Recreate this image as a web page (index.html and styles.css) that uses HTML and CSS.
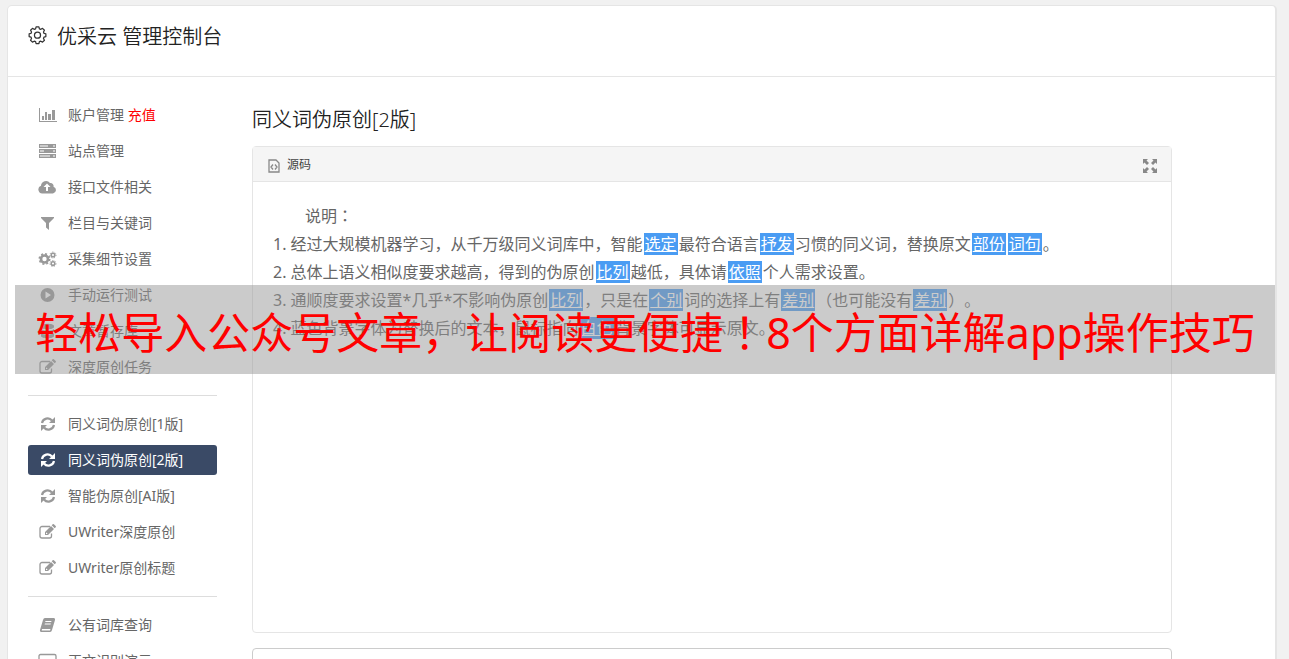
FILE: index.html
```
<!DOCTYPE html>
<html lang="zh-CN">
<head>
    <meta charset="utf-8">
    <title>优采云 管理控制台</title>
    <link rel="stylesheet" href="styles.css">
</head>
<body>
    <!-- icon shapes shared by the menu and the editor -->
    <svg class="sprite" width="0" height="0">
        <symbol id="gear" viewBox="0 0 20 20"><path fill="none" stroke="currentColor" stroke-width="1.300" stroke-linejoin="round" d="M8 3.500L8.500 1.500h3L12 3.500l1.500.5 1.800-1 2 2-1 1.800.5 1.400 2 .5v3l-2 .5-.5 1.500 1 1.800-2 2-1.800-1-1.500.5-.5 2h-3l-.5-2-1.500-.5-1.800 1-2-2 1-1.800-.5-1.500-2-.5v-3l2-.5.5-1.400-1-1.800 2-2 1.800 1z"/><circle cx="10" cy="10.200" r="3.200" fill="none" stroke="currentColor" stroke-width="1.300"/></symbol>
        <symbol id="chart" viewBox="0 0 20 16"><path fill="currentColor" d="M1 1h1v13h17v1H1zM4 9h2v4H4zM7 5h2v8H7zM10 7h3v6h-3zM14 3h3v10h-3z"/></symbol>
        <symbol id="server" viewBox="0 0 20 16"><path fill="currentColor" fill-rule="evenodd" d="M1 1h17v4H1zM1 6h17v4H1zM1 11h17v4H1zM2 2.500h8v1H2zM2 7.500h4v1H2zM2 12.500h10v1H2zM15 2.500h2v1h-2zM15 7.500h2v1h-2zM15 12.500h2v1h-2z"/></symbol>
        <symbol id="cloud" viewBox="0 0 20 16"><path fill="currentColor" fill-rule="evenodd" d="M5 14.500a4 4 0 0 1-2-7.700A5 5 0 0 1 12 4a3 3 0 0 1 3.500 3.700 3.500 3.500 0 0 1-.5 6.800zM9 4.500L5.500 8H8v4h2V8h2.500z"/></symbol>
        <symbol id="filter" viewBox="0 0 20 16"><path fill="currentColor" d="M3 2h13v1l-5 5v7l-3-2.500V8L3 3z"/></symbol>
        <symbol id="cogs" viewBox="0 0 20 16"><circle cx="6.500" cy="8" r="3.500" fill="none" stroke="currentColor" stroke-width="2.600"/><circle cx="6.500" cy="8" r="5.200" fill="none" stroke="currentColor" stroke-width="1.600" stroke-dasharray="2 2.080"/><g fill="none" stroke="currentColor" stroke-width="1.500"><circle cx="15" cy="4" r="1.800"/><circle cx="15" cy="12.500" r="1.800"/></g><g fill="none" stroke="currentColor" stroke-dasharray="1.200 1.400"><circle cx="15" cy="4" r="3"/><circle cx="15" cy="12.500" r="3"/></g></symbol>
        <symbol id="play" viewBox="0 0 20 16"><path fill="currentColor" fill-rule="evenodd" d="M9.500 1a7 7 0 1 1 0 14 7 7 0 0 1 0-14zM7.500 4.500v7l5.500-3.500z"/></symbol>
        <symbol id="database" viewBox="0 0 20 16"><path fill="currentColor" d="M3 3c0-3 13-3 13 0v1c0 3-13 3-13 0zM3 6c2 2 11 2 13 0v2c0 3-13 3-13 0zM3 10c2 2 11 2 13 0v3c0 3-13 3-13 0z"/></symbol>
        <symbol id="edit" viewBox="0 0 20 16"><path fill="none" stroke="currentColor" stroke-width="1.300" d="M12 2.500H4a2 2 0 0 0-2 2V12a2 2 0 0 0 2 2h7.500a2 2 0 0 0 2-2V9.500"/><path fill="currentColor" fill-rule="evenodd" d="M7 11V8l6-6 3 3-6 6zM13.700 1.300l1-1q.6-.5 1.200 0l1.800 1.800q.5.600 0 1.200l-1 1zM8 9v1h1l.5-.5-1-1z"/></symbol>
        <symbol id="sync" viewBox="0 0 20 16"><path fill="none" stroke="currentColor" stroke-width="2.200" d="M4 7a5.700 5.700 0 0 1 10-2.500M16 9a5.700 5.700 0 0 1-10 2.500"/><path fill="currentColor" d="M17 1v6h-6zM3 15V9h6z"/></symbol>
        <symbol id="book" viewBox="0 0 20 16"><path fill="currentColor" fill-rule="evenodd" d="M7 1h9q1.500.3 1 2l-3 10q-.4 2-2 2H4q-2.500 0-2-2L5 3q.5-2 2-2zM7.500 4l-.3 1h6l.3-1zM6.900 6.500l-.3 1h6l.3-1zM4 12l-.3 1.500H12l.5-1.500z"/></symbol>
        <symbol id="screen" viewBox="0 0 20 16"><rect x="1" y="1.500" width="17" height="12" rx="1.500" fill="none" stroke="currentColor" stroke-width="1.300"/></symbol>
        <symbol id="source" viewBox="0 0 12 14"><path fill="none" stroke="currentColor" stroke-width="1.300" d="M1 1h7l3 3v9H1zM5 5.500L3 8l2 2.500M7 5.500L9 8l-2 2.500"/></symbol>
        <symbol id="expand" viewBox="0 0 14 14"><path fill="currentColor" d="M0 0h5L3.500 1.500 6 4 4 6 1.500 3.500 0 5zM14 0v5l-1.500-1.500L10 6 8 4l2.500-2.500L9 0zM0 14V9l1.500 1.500L4 8l2 2-2.500 2.500L5 14zM14 14H9l1.500-1.500L8 10l2-2 2.500 2.500L14 9z"/></symbol>
    </svg>

    <div class="page">
        <header class="header">
            <svg class="logo"><use href="#gear"/></svg>
            <h1>优采云 管理控制台</h1>
        </header>
        <div class="content">
            <nav class="menu">
                <a class="item" href="#"><svg class="icon"><use href="#chart"/></svg><span>账户管理 <span class="recharge">充值</span></span></a>
                <a class="item" href="#"><svg class="icon"><use href="#server"/></svg>站点管理</a>
                <a class="item" href="#"><svg class="icon"><use href="#cloud"/></svg>接口文件相关</a>
                <a class="item" href="#"><svg class="icon"><use href="#filter"/></svg>栏目与关键词</a>
                <a class="item" href="#"><svg class="icon"><use href="#cogs"/></svg>采集细节设置</a>
                <a class="item" href="#"><svg class="icon"><use href="#play"/></svg>手动运行测试</a>
                <a class="item" href="#"><svg class="icon"><use href="#database"/></svg>文章暂存库</a>
                <a class="item" href="#"><svg class="icon"><use href="#edit"/></svg>深度原创任务</a>
                <hr>
                <a class="item" href="#"><svg class="icon"><use href="#sync"/></svg>同义词伪原创[1版]</a>
                <a class="item active" href="#"><svg class="icon"><use href="#sync"/></svg>同义词伪原创[2版]</a>
                <a class="item" href="#"><svg class="icon"><use href="#sync"/></svg>智能伪原创[AI版]</a>
                <a class="item" href="#"><svg class="icon"><use href="#edit"/></svg>UWriter深度原创</a>
                <a class="item" href="#"><svg class="icon"><use href="#edit"/></svg>UWriter原创标题</a>
                <hr>
                <a class="item" href="#"><svg class="icon"><use href="#book"/></svg>公有词库查询</a>
                <a class="item" href="#"><svg class="icon"><use href="#screen"/></svg>正文识别演示</a>
            </nav>
            <main class="main">
                <h2>同义词伪原创[2版]</h2>
                <section class="editor">
                    <div class="toolbar">
                        <button class="tool" type="button"><svg class="source-icon"><use href="#source"/></svg>源码</button>
                        <button class="tool" type="button" aria-label="全屏"><svg class="expand-icon"><use href="#expand"/></svg></button>
                    </div>
                    <div class="text">
                        <p class="intro">说明<span class="mark" lang="zh-TW">：</span></p>
                        <p>1. 经过大规模机器学习，从千万级同义词库中，智能<u>选定</u>最符合语言<u>抒发</u>习惯的同义词，替换原文<u>部份</u><u>词句</u>。</p>
                        <p>2. 总体上语义相似度要求越高，得到的伪原创<u>比列</u>越低，具体请<u>依照</u>个人需求设置。</p>
                        <p>3. 通顺度要求设置*几乎*不影响伪原创<u>比列</u>，只是在<u>个别</u>词的选择上有<u>差别</u>（也可能没有<u>差别</u>）。</p>
                        <p>4. 蓝色背景字体为替换后的文本，鼠标指向<u>白色</u>背景字体可显示原文。</p>
                    </div>
                </section>
                <section class="panel"></section>
            </main>
        </div>
    </div>

    <div class="banner">轻松导入公众号文章，让阅读更便捷<span class="mark" lang="zh-TW">！</span>8个方面详解app操作技巧</div>
</body>
</html>
```
FILE: styles.css
```
* {
    box-sizing: border-box;
}
body {
    margin: 0;
    padding: 5px 12px 0 7px;
    height: 100vh;
    overflow: hidden;
    background-color: #f1f1f1;
    color: #666;
    font-family: "Noto Sans", "Noto Sans CJK SC", sans-serif;
    font-size: 14px;
    text-spacing-trim: space-all;
}
.sprite {
    position: absolute;
}
.page {
    min-height: 100vh;
    background-color: #fff;
    border: 1px solid #e5e5e5;
    border-right-width: 2px;
    border-radius: 5px;
}
.header {
    display: flex;
    align-items: flex-start;
    gap: 10px;
    padding: 14px 20px 23px;
    border-bottom: 1px solid #e5e5e5;
    color: #333;
}
.logo {
    width: 19px;
    height: 20px;
    margin-top: 5px;
}
h1, h2 {
    margin: 0;
    color: #222;
    font-size: 20px;
    font-weight: 350;
    line-height: 33px;
}
.content {
    display: flex;
    gap: 35px;
    padding: 23px 103px 0 20px;
}
.menu {
    flex: 0 0 189px;
}
.item {
    display: flex;
    align-items: center;
    gap: 10px;
    height: 30px;
    margin-bottom: 6px;
    padding-left: 10px;
    border-radius: 3px;
    color: #666;
    line-height: 30px;
    text-decoration: none;
    white-space: nowrap;
}
.item.active {
    background-color: #3a4a66;
    color: #fff;
}
.icon {
    flex: none;
    width: 20px;
    height: 16px;
    color: #999;
}
.active .icon {
    color: #fff;
}
.recharge {
    color: #f00;
}
hr {
    height: 1px;
    margin: 13px 0;
    border: 0;
    background-color: #ddd;
}
.main {
    flex: 1;
    min-width: 0;
}
h2 {
    margin: 3px 0 10px;
}
.editor {
    min-height: 487px;
    border: 1px solid #e5e5e5;
    border-radius: 4px;
}
.toolbar {
    display: flex;
    justify-content: space-between;
    align-items: center;
    height: 35px;
    padding: 0 14px 0 15px;
    background-color: #f5f5f5;
    border-bottom: 1px solid #e5e5e5;
}
.tool {
    display: flex;
    align-items: center;
    gap: 7px;
    padding: 0;
    border: 0;
    background: none;
    color: #444;
    font-family: inherit;
    font-size: 12px;
}
.tool svg {
    margin-top: 4px;
    color: #888;
}
.source-icon {
    width: 12px;
    height: 14px;
}
.expand-icon {
    width: 14px;
    height: 14px;
}
.text {
    padding: 20px;
    font-size: 16px;
    line-height: 28px;
}
.text p {
    margin: 0;
}
.text .intro {
    padding-left: 32px;
}
.text u {
    margin: 0 1px;
    padding: 0 1px;
    background-color: #4a9cf3;
    color: #fff;
}
/* punctuation centred in its square */
.mark {
    font-family: "Noto Sans", "Noto Sans CJK TC", sans-serif;
}
.panel {
    height: 60px;
    margin-top: 15px;
    border: 1px solid #ccc;
    border-radius: 4px;
}
.banner {
    position: absolute;
    top: 285px;
    left: 15px;
    right: 14px;
    padding-top: 6px;
    background-color: rgba(151, 151, 151, 0.5);
    color: #f00;
    font-size: 43px;
    line-height: 83px;
    text-align: center;
    white-space: nowrap;
}
```
